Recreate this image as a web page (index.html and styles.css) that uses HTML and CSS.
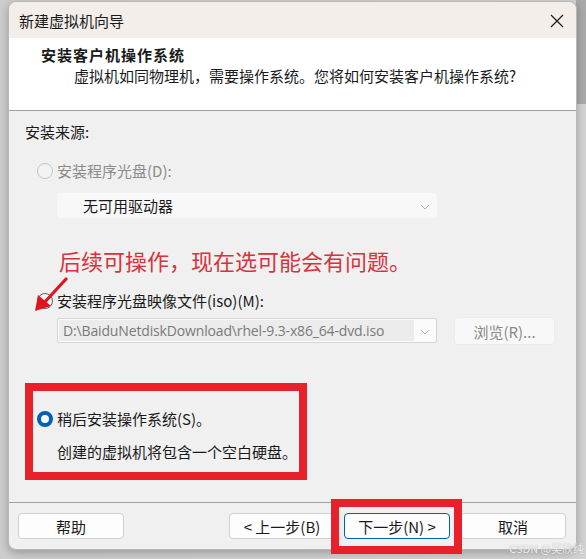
FILE: index.html
```html
<!DOCTYPE html>
<html lang="zh-CN">
<head>
<meta charset="utf-8">
<title>新建虚拟机向导</title>
<link rel="stylesheet" href="styles.css">
</head>
<body>
<div class="backdrop">
  <div class="window">
    <div class="titlebar">
      <span class="title">新建虚拟机向导</span>
      <svg class="close" width="14" height="14" viewBox="0 0 14 14"><path d="M1 1L13 13M13 1L1 13" stroke="#1a1a1a" stroke-width="1.2" fill="none"/></svg>
    </div>
    <div class="header">
      <div class="h-title">安装客户机操作系统</div>
      <div class="h-sub">虚拟机如同物理机，需要操作系统。您将如何安装客户机操作系统?</div>
    </div>
    <div class="content">
      <div class="label">安装来源:</div>
      <div class="radio-row disabled r1">
        <span class="radio"></span><span>安装程序光盘(D):</span>
      </div>
      <div class="select sel1">
        <span class="sel-text">无可用驱动器</span>
        <svg class="chev" width="10" height="6" viewBox="0 0 10 6"><path d="M1 1L5 5L9 1" stroke="#b0b0b0" stroke-width="1" fill="none"/></svg>
      </div>
      <div class="note">后续可操作，现在选可能会有问题。</div>
      <div class="radio-row r2">
        <span class="radio"></span><span>安装程序光盘映像文件(iso)(M):</span>
        <svg class="arrow" width="38" height="36" viewBox="0 0 38 36"><path d="M33 2L10 27" stroke="#e0141e" stroke-width="3.2" stroke-linecap="round" fill="none"/><path d="M2 34L5 18L18 29Z" fill="#e0141e"/></svg>
      </div>
      <div class="iso-row">
        <div class="select sel2">
          <span class="sel-fill">D:\BaiduNetdiskDownload\rhel-9.3-x86_64-dvd.iso</span>
          <svg class="chev" width="10" height="6" viewBox="0 0 10 6"><path d="M1 1L5 5L9 1" stroke="#b0b0b0" stroke-width="1" fill="none"/></svg>
        </div>
        <div class="btn browse">浏览(R)...</div>
      </div>
      <div class="later">
        <div class="radio-row r3">
          <span class="radio checked"></span><span>稍后安装操作系统(S)。</span>
        </div>
        <div class="later-desc">创建的虚拟机将包含一个空白硬盘。</div>
        <div class="mark mark-later"></div>
      </div>
    </div>
    <div class="footer">
      <div class="btn">帮助</div>
      <div class="spacer"></div>
      <div class="btn">&lt; 上一步(B)</div>
      <div class="next-wrap">
        <div class="btn focused">下一步(N) &gt;</div>
        <div class="mark mark-next"></div>
      </div>
      <div class="btn cancel">取消</div>
    </div>
  </div>
  <div class="watermark">CSDN @吴欣纯</div>
</div>
</body>
</html>
```

FILE: styles.css
```css
* { box-sizing: border-box; }
html, body { margin: 0; padding: 0; }
body {
  width: 586px;
  height: 559px;
  overflow: hidden;
  font-family: "Noto Sans CJK SC", "Microsoft YaHei", sans-serif;
  font-size: 15px;
  color: #1a1a1a;
}
.backdrop {
  position: relative;
  width: 586px;
  height: 559px;
  background: linear-gradient(to right, #cdcdcd 0, #d2d2d2 100%);
  padding: 1px 9px 0 8px;
}
.backdrop::after {
  content: "";
  position: absolute;
  right: 0; top: 0;
  width: 10px; height: 104px;
  background: #a9a9a9;
}
.window {
  position: relative;
  z-index: 1;
  width: 569px;
  height: 549px;
  background: #f0f0f0;
  border-radius: 8px;
  border: 1px solid #b8b8b8;
  box-shadow: 0 3px 8px rgba(0,0,0,0.25);
  display: flex;
  flex-direction: column;
}
.titlebar {
  height: 36px;
  flex: none;
  background: #f3eeea;
  border-radius: 8px 8px 0 0;
  display: flex;
  align-items: center;
  justify-content: space-between;
  padding: 0 12px 0 10px;
}
.title { font-size: 15px; color: #1a1a1a; }
.close { margin-top: 1px; }
.header {
  height: 73px;
  flex: none;
  background: #ffffff;
  border-bottom: 1px solid #a0a0a0;
  padding: 7px 0 0 32px;
}
.h-title { font-weight: bold; font-size: 15px; line-height: 20px; letter-spacing: 1px; }
.h-sub { padding-left: 33px; line-height: 21px; }
.content {
  flex: 1;
  padding: 11px 0 0 16px;
  display: flex;
  flex-direction: column;
  position: relative;
}
.label { line-height: 20px; }
.radio-row {
  display: flex;
  align-items: center;
  gap: 4px;
  line-height: 20px;
  padding-left: 12px;
  position: relative;
}
.radio {
  width: 16px; height: 16px;
  border-radius: 50%;
  border: 1px solid #5c5c5c;
  background: #f6f6f6;
  display: inline-block;
  flex: none;
}
.disabled { color: #8a8a8a; }
.disabled .radio { border-color: #c4c4c4; background: #f3f3f3; }
.radio.checked {
  border: 4.5px solid #005fb8;
  background: #ffffff;
}
.r1 { margin-top: 19px; }
.select {
  position: relative;
  height: 26px;
  background: #f8f8f8;
  border: 1px solid #e6e6e6;
  border-radius: 3px;
  display: flex;
  align-items: center;
}
.sel1 { margin: 12px 0 0 32px; width: 380px; border-color: #f8f8f8; height: 25px; }
.sel-text { padding-left: 25px; color: #1a1a1a; }
.chev { position: absolute; right: 6px; top: 10px; }
.note {
  margin: 27px 0 0 34px;
  font-size: 22px;
  line-height: 30px;
  color: #d7333c;
}
.r2 { margin-top: 16px; }
.arrow { position: absolute; left: 8px; top: -14px; }
.iso-row { display: flex; margin: 6px 0 0 32px; gap: 17px; align-items: flex-start; }
.sel2 {
  width: 380px;
  height: 25px;
  margin-top: 1px;
  background: #fbfbfb;
  border: 1px solid #d6d6d6;
  border-radius: 2px;
  padding: 1px;
}
.sel-fill {
  background: #ececec;
  height: 100%;
  width: 355px;
  padding-left: 4px;
  color: #7a7a7a;
  line-height: 21px;
  font-family: "Open Sans", "Noto Sans CJK SC", sans-serif;
  font-size: 14px;
  letter-spacing: -0.15px;
  white-space: nowrap;
  overflow: hidden;
}
.btn {
  width: 106px;
  height: 27px;
  display: flex;
  align-items: center;
  justify-content: center;
  background: #fdfdfd;
  border: 1px solid #d0d0d0;
  border-radius: 4px;
  color: #1a1a1a;
  flex: none;
}
.browse { width: 101px; height: 28px; color: #8a8a8a; background: #f8f8f8; border-color: #ececec; }
.later { position: relative; margin-top: 64px; }
.later-desc { padding-left: 32px; margin-top: 13px; line-height: 20px; }
.mark { position: absolute; border: 8px solid #e8202a; pointer-events: none; }
.mark-later { left: 0; top: -26px; width: 282px; height: 97px; }
.footer {
  height: 47px;
  flex: none;
  border-top: 1px solid #a0a0a0;
  display: flex;
  align-items: flex-start;
  padding: 10px 10px 0 9px;
  gap: 9px;
}
.spacer { flex: 1; }
.footer .btn { height: 26px; }
.cancel { margin-left: 1px; }
.next-wrap { position: relative; }
.focused { border: 1px solid #005fb8; }
.mark-next { left: -13px; top: -14px; width: 131px; height: 55px; }
.watermark {
  position: absolute;
  z-index: 2;
  right: 2px; bottom: 3px;
  font-size: 11px;
  color: rgba(255,255,255,0.85);
  text-shadow: 0 0 1px #9a9a9a;
  font-family: "Noto Sans CJK SC", sans-serif;
}
```
